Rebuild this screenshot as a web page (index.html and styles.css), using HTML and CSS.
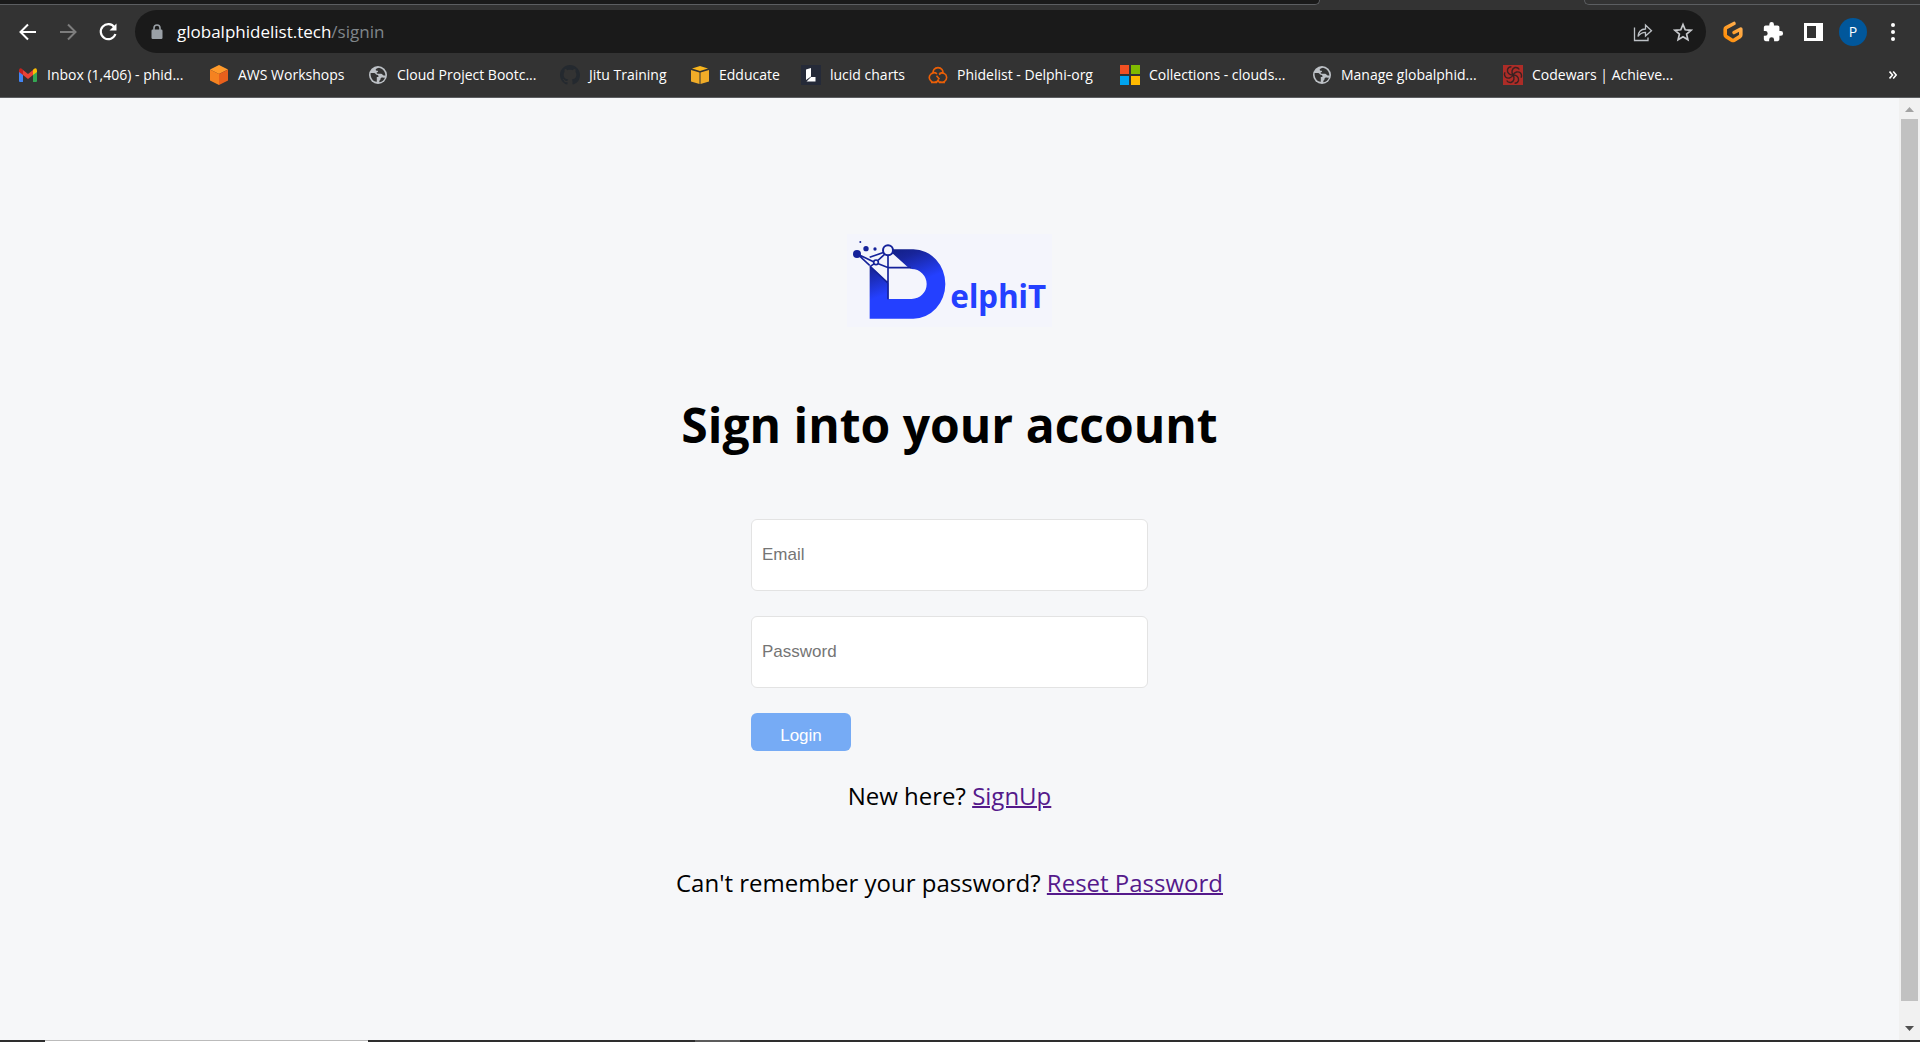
FILE: index.html
```html
<!DOCTYPE html>
<html lang="en">
<head>
<meta charset="utf-8">
<title>Sign in</title>
<link rel="stylesheet" href="styles.css">
</head>
<body>
<svg class="defs" aria-hidden="true">
  <symbol id="globe" viewBox="0 0 20 20">
    <circle cx="10" cy="10" r="9" fill="#bdc1c6"/>
    <path d="M2.600 8h3.600c1.200 0 1.400 1.600 2.600 1.800 1.600.2 1.800 1 1.600 2.200h-1.600v4.800C5 17 2.200 12.500 2.600 8zM11 2.700c-1 .6-2.600.5-3.200 1.600-.4 1.100.5 1.400 1.700 1.500 1 .2.600 1.300-.4 1.400-.9.3-.6 1.400.6 1.500h3.400c1.200.1 1.400 1.500 2.600 1.700l1.700.1C17.300 6.500 14.800 3.500 11 2.700zM11.500 17.200c2.600-.5 4.800-2.200 5.500-4.800-1.500.7-2.500-.2-3.700.3-1.300.7-.4 2-1.400 2.500-.6.400-.8 1.200-.4 2z" fill="#333"/>
  </symbol>
</svg>

<header class="browser">
  <div class="tabs"><span class="tab-left"></span><span class="tab-right"></span></div>
  <div class="toolbar">
    <button class="tool" aria-label="Back"><svg width="20" height="20" viewBox="0 0 20 20" fill="none" stroke="#fff" stroke-width="2"><path d="M18 10H3M10 2.500L2.500 10l7.500 7.500"/></svg></button>
    <button class="tool" aria-label="Forward"><svg width="20" height="20" viewBox="0 0 20 20" fill="none" stroke="#7d7d7d" stroke-width="2"><path d="M2 10h15M10 2.500l7.500 7.500-7.500 7.500"/></svg></button>
    <button class="tool" aria-label="Reload"><svg width="20" height="20" viewBox="0 0 20 20" fill="none" stroke="#fff" stroke-width="2.200"><path d="M16.500 5.500A7.500 7.500 0 1 0 17.400 12"/><path d="M18.500 1.500v7h-7z" fill="#fff" stroke="none"/></svg></button>
    <div class="omnibox">
      <svg class="lock" width="12" height="16" viewBox="0 0 12 16"><rect x="0.500" y="5.500" width="11" height="9.500" rx="1.200" fill="#9aa0a6"/><path d="M3 6V4a3 3 0 0 1 6 0v2" fill="none" stroke="#9aa0a6" stroke-width="1.600"/></svg>
      <div class="url" role="textbox" aria-label="Address" contenteditable="true" spellcheck="false">globalphidelist.tech<span class="url-path">/signin</span></div>
      <button class="tool" aria-label="Share"><svg width="20" height="20" viewBox="0 0 20 20" fill="none" stroke="#bdc1c6" stroke-width="1.300"><path d="M1.500 5.500v13h13.500v-3"/><path d="M5 14.500c.4-4.700 2.800-7.300 7.500-7.500V3l6 5.700-6 5.300v-3.700c-3.300 0-5.700 1.200-7.500 4.200z"/></svg></button>
      <button class="tool" aria-label="Bookmark"><svg width="20" height="20" viewBox="0 0 20 20" fill="none" stroke="#c8cacd" stroke-width="1.700"><path d="M10 2.500l2.200 5.300 5.800.5-4.400 3.800 1.300 5.600-4.900-3-4.900 3 1.300-5.600L2 8.300l5.800-.5z"/></svg></button>
    </div>
    <button class="tool" aria-label="G extension"><svg width="20" height="22" viewBox="0 0 20 22" fill="none"><defs><linearGradient id="gp" x1="0" y1="1" x2="1" y2="0"><stop offset="0" stop-color="#ff8a00"/><stop offset="1" stop-color="#ffb45b"/></linearGradient></defs><path d="M11 2.500L3.200 6.600Q2.200 7.200 2.200 8.300v5.600q0 1.100 1 1.700l5.600 3.500q1.200.7 2.400 0l5.600-3.500q1-.6 1-1.700V8L11 11.500" stroke="url(#gp)" stroke-width="3.600" stroke-linecap="round" stroke-linejoin="round"/></svg></button>
    <button class="tool" aria-label="Extensions"><svg width="22" height="22" viewBox="0 0 24 24" fill="#fff"><path d="M20.500 11H19V7a2 2 0 0 0-2-2h-4V3.500a2.500 2.500 0 0 0-5 0V5H4a2 2 0 0 0-2 2v3.800h1.500a2.700 2.700 0 0 1 0 5.400H2V20a2 2 0 0 0 2 2h3.800v-1.500a2.700 2.700 0 0 1 5.400 0V22H17a2 2 0 0 0 2-2v-4h1.500a2.500 2.500 0 0 0 0-5z"/></svg></button>
    <button class="tool" aria-label="Side panel"><svg width="19" height="18" viewBox="0 0 19 18"><path d="M0 0h19v18H0zM3 3v12h9V3z" fill="#fff" fill-rule="evenodd"/></svg></button>
    <button class="tool" aria-label="Profile"><span class="avatar">P</span></button>
    <button class="tool" aria-label="Menu"><svg width="4" height="18" viewBox="0 0 4 18" fill="#fff"><circle cx="2" cy="2" r="2"/><circle cx="2" cy="9" r="2"/><circle cx="2" cy="16" r="2"/></svg></button>
  </div>
  <nav class="bookmarks" aria-label="Bookmarks">
    <a href="#"><svg viewBox="0 0 20 20"><path d="M1 5v11q0 1 1 1h3V8z" fill="#4285f4"/><path d="M19 5v11q0 1-1 1h-3V8z" fill="#34a853"/><path d="M5 5l5 4 5-4v5l-5 4-5-4z" fill="#ea4335"/><path d="M1 5.500Q1 3 3 3.200L5 4.800V10L1 7z" fill="#c5221f"/><path d="M19 5.500Q19 3 17 3.200L15 4.800V10l4-3z" fill="#fbbc04"/></svg><span>Inbox (1,406) - phid...</span></a>
    <a href="#"><svg viewBox="0 0 20 20"><path d="M10 0l9 4.500L10 9 1 4.500z" fill="#ff9a2b"/><path d="M1 4.500L10 9v11l-9-4.500z" fill="#f58220"/><path d="M19 4.500L10 9v11l9-4.500z" fill="#e8601c"/></svg><span>AWS Workshops</span></a>
    <a href="#"><svg><use href="#globe"/></svg><span>Cloud Project Bootc...</span></a>
    <a href="#"><svg viewBox="0 0 16 16"><path fill="#24292f" d="M8 0C3.580 0 0 3.580 0 8c0 3.540 2.290 6.530 5.470 7.590.4.070.55-.17.55-.38 0-.19-.01-.82-.01-1.490-2.010.37-2.530-.49-2.690-.94-.09-.23-.48-.94-.82-1.130-.28-.15-.68-.52-.01-.53.63-.01 1.080.58 1.230.82.72 1.210 1.870.87 2.330.66.07-.52.28-.87.51-1.070-1.780-.2-3.640-.89-3.640-3.950 0-.87.31-1.590.82-2.150-.08-.2-.36-1.020.08-2.120 0 0 .67-.21 2.200.82.640-.18 1.320-.27 2-.27s1.360.09 2 .27c1.530-1.040 2.200-.82 2.200-.82.44 1.100.16 1.920.08 2.120.51.56.82 1.270.82 2.150 0 3.070-1.870 3.750-3.650 3.950.29.25.54.73.54 1.480 0 1.070-.01 1.930-.01 2.200 0 .21.15.46.55.38A8.010 8.010 0 0 0 16 8c0-4.420-3.580-8-8-8z"/></svg><span>Jitu Training</span></a>
    <a href="#"><svg viewBox="0 0 20 20"><path d="M10 1l8 2.500-8 2.500-8-2.500z" fill="#f9b51c"/><path d="M1 5l8.500 2.500v11.500L1 16.500zM19 5l-8.500 2.500v11.500l8.500-2.500z" fill="#f0ac28"/></svg><span>Edducate</span></a>
    <a href="#"><svg viewBox="0 0 20 20"><path d="M0 0h20v20H0z" fill="#252a38"/><path d="M5 4.500L10 3v8.500L5 15zM5.500 16.500l4.500-4.500h4.500v4.500z" fill="#fff"/></svg><span>lucid charts</span></a>
    <a href="#"><svg viewBox="0 0 20 20" fill="none" stroke="#eb5f07" stroke-width="1.600"><path d="M5.200 9A5 5 0 1 1 14.800 9M9 8.800A4.700 4.700 0 1 0 8.700 16.500M11.500 8.500A4.700 4.700 0 1 1 12 16.800M8.500 10.800l3 3.500M14 7.500l-3 2M3 17.500h5.500l1.500-2.300 1.500 2.300H17"/></svg><span>Phidelist - Delphi-org</span></a>
    <a href="#"><svg viewBox="0 0 20 20"><path d="M0 0h9v9H0z" fill="#f25022"/><path d="M11 0h9v9h-9z" fill="#7fba00"/><path d="M0 11h9v9H0z" fill="#00a4ef"/><path d="M11 11h9v9h-9z" fill="#ffb900"/></svg><span>Collections - clouds...</span></a>
    <a href="#"><svg><use href="#globe"/></svg><span>Manage globalphid...</span></a>
    <a href="#"><svg viewBox="0 0 20 20"><path d="M0 0h20v20H0z" fill="#ad2c27"/><g fill="none" stroke="#3a2222" stroke-width="1.400"><path id="petal" d="M10 10C8 7 9 3.500 12 2.500c2-.3 3.500.5 4.300 2"/><use href="#petal" transform="rotate(60 10 10)"/><use href="#petal" transform="rotate(120 10 10)"/><use href="#petal" transform="rotate(180 10 10)"/><use href="#petal" transform="rotate(240 10 10)"/><use href="#petal" transform="rotate(300 10 10)"/></g></svg><span>Codewars | Achieve...</span></a>
    <button class="more" aria-label="More bookmarks"><svg width="8" height="8" viewBox="0 0 8 8" fill="none" stroke="#fff" stroke-width="1.600"><path d="M.5.500L3.500 4 .5 7.500M4.200.500L7.200 4 4.200 7.500"/></svg></button>
  </nav>
</header>

<div class="viewport">
  <main class="signin">
    <svg class="logo" viewBox="51 42 615 279" role="img" aria-label="DelphiT">
      <defs>
        <linearGradient id="dg" gradientUnits="userSpaceOnUse" x1="150" y1="80" x2="200" y2="210"><stop offset="0" stop-color="#0f1c7c"/><stop offset=".4" stop-color="#18259b"/><stop offset="1" stop-color="#2440ff"/></linearGradient>
      </defs>
      <path d="M51 42h615v279H51z" fill="#f4f5fc"/>
      <path d="M174 88h76a96 104 0 0 1 0 208H119V136l56 54v47h70a45 45 0 0 0 0-90l-12-6z" fill="url(#dg)"/>
      <g fill="none" stroke="#15229a" stroke-width="5">
        <path d="M82 102L119 136M82 102l50 24M119 112l45-16M120 140l13-9M144 121l22-20M174 108v130M145 131l30 12h68M121 140l54 50"/>
        <circle cx="138" cy="127" r="7"/>
      </g>
      <circle cx="174" cy="91" r="15" fill="#f4f5fc" stroke="#15229a" stroke-width="6"/>
      <g fill="#15229a"><circle cx="81" cy="102" r="12"/><circle cx="108" cy="86" r="8"/><circle cx="135" cy="87" r="5"/><circle cx="91" cy="66" r="3"/></g>
      <text class="logo-text" x="361" y="265">elphiT</text>
    </svg>
    <h1>Sign into your account</h1>
    <form class="form">
      <input type="email" placeholder="Email" aria-label="Email">
      <input type="password" placeholder="Password" aria-label="Password">
      <button class="login" type="button">Login</button>
    </form>
    <p>New here? <a href="#">SignUp</a></p>
    <p>Can't remember your password? <a href="#">Reset Password</a></p>
  </main>
  <div class="scrollbar" aria-hidden="true">
    <svg width="9" height="5" viewBox="0 0 9 5"><path d="M0 5L4.500 0 9 5z" fill="#a3a3a3"/></svg>
    <span class="thumb"></span>
    <svg width="9" height="5" viewBox="0 0 9 5"><path d="M0 0l4.500 5L9 0z" fill="#505050"/></svg>
  </div>
</div>
<div class="taskbar" aria-hidden="true"><span class="task-open"></span><span class="task-active"></span></div>
</body>
</html>
```
FILE: styles.css
```css
* { box-sizing: border-box; }

body {
  margin: 0;
  min-height: 100vh;
  display: flex;
  flex-direction: column;
  background: #f6f7f9;
  color: #000;
  font-family: "Open Sans", "Noto Sans", sans-serif;
}

button {
  border: 0;
  padding: 0;
  background: none;
  font: inherit;
}

.defs { position: absolute; width: 0; height: 0; }

/* Browser chrome */
.browser {
  background: #333;
  color: #fff;
  border-bottom: 1px solid #5c5e61;
}

.tabs {
  display: flex;
  justify-content: space-between;
  height: 5px;
}

.tab-left {
  width: 68.75%;
  background: #1a1a1a;
  border: solid #5c5e61;
  border-width: 0 1px 1px 0;
  border-bottom-right-radius: 6px;
}

.tab-right {
  width: 17.5%;
  border: solid #5c5e61;
  border-width: 0 0 1px 1px;
  border-bottom-left-radius: 6px;
}

.toolbar {
  display: flex;
  align-items: center;
  height: 53px;
  padding: 0 7px 0 8px;
}

.tool {
  width: 40px;
  height: 40px;
  display: flex;
  align-items: center;
  justify-content: center;
}

.omnibox {
  flex: 1;
  display: flex;
  align-items: center;
  height: 43px;
  margin: 0 7px;
  padding: 0 3px 0 16px;
  border-radius: 22px;
  background: #1a1a1a;
}

.url {
  flex: 1;
  margin-left: 14px;
  font-size: 17px;
  line-height: 24px;
}

.url-path { color: #80868b; }

.avatar {
  width: 28px;
  height: 28px;
  border-radius: 50%;
  background: #01579b;
  color: #fff;
  font-size: 14px;
  line-height: 28px;
}

.bookmarks {
  display: grid;
  grid-template-columns: 191px 159px 192px 130px 111px 127px 192px 192px 191px 1fr 20px;
  align-items: center;
  height: 39px;
  padding: 0 17px 5px 18px;
}

.bookmarks a {
  display: flex;
  align-items: center;
  gap: 9px;
  color: #fff;
  font-size: 14px;
  line-height: 20px;
  text-decoration: none;
  white-space: nowrap;
}

.bookmarks a svg { width: 20px; height: 20px; flex: none; }

.more { display: flex; justify-content: center; }

/* Page */
.viewport { flex: 1; display: flex; }

.signin {
  flex: 1;
  display: flex;
  flex-direction: column;
  align-items: center;
  padding: 136px 20px 40px;
}

.logo { width: 205px; height: 93px; }

.logo-text {
  font: 700 94px "Noto Sans", sans-serif;
  fill: #2440ff;
}

h1 {
  margin: 64px 0 60px;
  font-size: 48px;
  line-height: 68px;
  font-weight: 700;
}

.form {
  width: 397px;
  display: flex;
  flex-direction: column;
  gap: 25px;
  margin-bottom: 27px;
}

.form input {
  width: 100%;
  height: 72px;
  padding: 0 10px;
  border: 1px solid #e3e3e3;
  border-radius: 6px;
  background: #fff;
  font: 17px "Liberation Sans", Arial, sans-serif;
}

.form input::placeholder { color: #757575; }

.login {
  width: 100px;
  height: 38px;
  padding-top: 8px;
  border-radius: 6px;
  background: #76abf5;
  color: #fff;
  font: 17px "Liberation Sans", Arial, sans-serif;
}

p {
  margin: 0 0 51px;
  font-size: 24px;
  line-height: 36px;
}

p a { color: #551a8b; text-decoration-thickness: 2px; }

.scrollbar {
  width: 21px;
  display: flex;
  flex-direction: column;
  align-items: center;
  gap: 7px;
  padding: 9px 0;
  background: #f1f1f1;
}

.thumb {
  flex: 1;
  width: 17px;
  margin-bottom: 18px;
  background: #c1c1c1;
}

.taskbar {
  display: flex;
  height: 2px;
  padding-left: 45px;
  background: #2e2e2e;
}

.task-open {
  width: 17.25%;
  background: #fff;
  border-top: 1px solid #bbb;
}

.task-active {
  width: 45px;
  margin-left: 17.4%;
  background: #5c5c5c;
}
```
